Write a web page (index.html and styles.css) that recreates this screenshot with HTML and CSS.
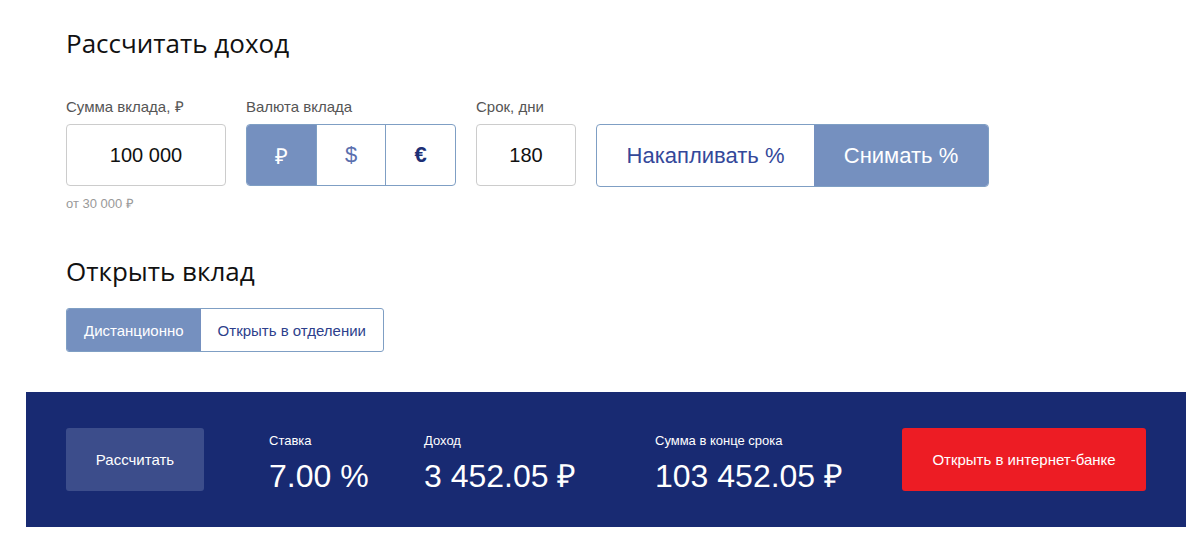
FILE: index.html
```html
<!DOCTYPE html>
<html lang="ru">
<head>
    <meta charset="UTF-8">
    <title>Калькулятор вклада</title>
    <link rel="stylesheet" href="styles.css">
</head>
<body>
    <div class="calc">
        <h2 class="title">Рассчитать доход</h2>
        <div class="fields">
            <div class="field">
                <div class="label">Сумма вклада, ₽</div>
                <div class="input sum">100 000</div>
                <div class="hint">от 30 000 ₽</div>
            </div>
            <div class="field">
                <div class="label">Валюта вклада</div>
                <div class="currency">
                    <div class="cur active">₽</div>
                    <div class="cur usd">$</div>
                    <div class="cur eur">€</div>
                </div>
            </div>
            <div class="field">
                <div class="label">Срок, дни</div>
                <div class="input days">180</div>
            </div>
            <div class="field">
                <div class="label">&nbsp;</div>
                <div class="mode">
                    <div class="mode-item acc">Накапливать %</div>
                    <div class="mode-item active">Снимать %</div>
                </div>
            </div>
        </div>

        <h2 class="title second">Открыть вклад</h2>
        <div class="tabs">
            <div class="tab active">Дистанционно</div>
            <div class="tab">Открыть в отделении</div>
        </div>
    </div>

    <div class="result">
        <button class="btn calc-btn">Рассчитать</button>
        <div class="stat rate">
            <div class="stat-label">Ставка</div>
            <div class="stat-value">7.00 %</div>
        </div>
        <div class="stat income">
            <div class="stat-label">Доход</div>
            <div class="stat-value">3 452.05 ₽</div>
        </div>
        <div class="stat total">
            <div class="stat-label">Сумма в конце срока</div>
            <div class="stat-value">103 452.05 ₽</div>
        </div>
        <button class="btn open-btn">Открыть в интернет-банке</button>
    </div>
</body>
</html>
```

FILE: styles.css
```css
body {
    margin: 0;
    background: #fff;
    font-family: "Liberation Sans", Arial, sans-serif;
    color: #222;
}
.calc {
    padding: 23px 0 0 66px;
}
.title {
    font-family: "Open Sans", "Liberation Sans", sans-serif;
    font-weight: 400;
    font-size: 26px;
    line-height: 40px;
    color: #111;
    margin: 0 0 35px;
}
.title.second {
    margin: 0 0 17px;
}
.fields {
    display: flex;
    gap: 20px;
    height: 153px;
}
.label {
    font-size: 15px;
    color: #555;
    line-height: 17px;
    margin-bottom: 9px;
}
.input {
    height: 60px;
    border: 1px solid #ccc;
    border-radius: 4px;
    display: flex;
    align-items: center;
    justify-content: center;
    font-size: 20px;
    color: #111;
}
.input.sum {
    width: 158px;
}
.input.days {
    width: 98px;
}
.hint {
    font-size: 13px;
    color: #999;
    margin-top: 8px;
}
.currency {
    display: flex;
    width: 208px;
    height: 60px;
    border: 1px solid #7f9fc4;
    border-radius: 4px;
    overflow: hidden;
}
.cur {
    flex: 1;
    display: flex;
    align-items: center;
    justify-content: center;
    font-size: 22px;
    color: #5a6fae;
}
.cur + .cur {
    border-left: 1px solid #7f9fc4;
}
.cur.active {
    background: #7590bf;
    color: #fff;
}
.cur.eur {
    color: #1d2f75;
    font-weight: bold;
}
.mode {
    display: flex;
    height: 61px;
    margin-top: 1px;
    border: 1px solid #7f9fc4;
    border-radius: 4px;
    overflow: hidden;
}
.mode-item {
    display: flex;
    align-items: center;
    justify-content: center;
    font-size: 22px;
    color: #34489a;
}
.mode-item.acc {
    width: 217px;
}
.mode-item.active {
    width: 174px;
    background: #7590bf;
    color: #fff;
}
.tabs {
    display: inline-flex;
    height: 42px;
    border: 1px solid #7f9fc4;
    border-radius: 3px;
    overflow: hidden;
}
.tab {
    display: flex;
    align-items: center;
    padding: 0 17px;
    font-size: 15px;
    color: #2d3f8c;
}
.tab.active {
    background: #7590bf;
    color: #fff;
}
.result {
    display: flex;
    align-items: flex-start;
    margin: 40px 0 0 26px;
    width: 1160px;
    height: 135px;
    box-sizing: border-box;
    padding: 36px 0 0 40px;
    background: #182a72;
    color: #fff;
}
.btn {
    height: 63px;
    border: none;
    border-radius: 3px;
    color: #fff;
    font-family: "Liberation Sans", Arial, sans-serif;
    font-size: 15px;
    cursor: pointer;
}
.calc-btn {
    width: 138px;
    background: #3c4d8b;
    margin-right: 65px;
}
.stat {
    padding-top: 5px;
}
.stat.rate {
    width: 155px;
}
.stat.income {
    width: 231px;
}
.stat.total {
    width: 247px;
}
.stat-label {
    font-size: 13px;
    line-height: 16px;
}
.stat-value {
    font-size: 32px;
    line-height: 40px;
    margin-top: 7px;
}
.open-btn {
    width: 244px;
    background: #ed1c24;
}
```
